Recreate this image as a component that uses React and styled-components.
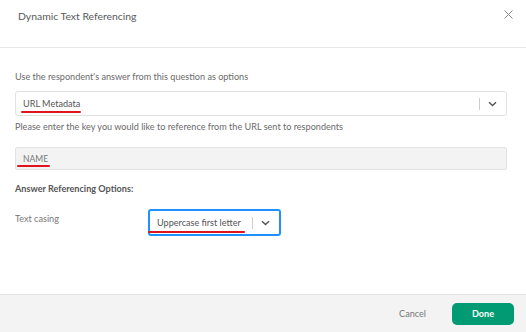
import React from "react";
import styled, { createGlobalStyle } from "styled-components";

const Global = createGlobalStyle`
  html, body { margin: 0; padding: 0; background: #fff; }
  body { font-family: Lato, "Liberation Sans", sans-serif; }
  * { box-sizing: border-box; }
`;

const Modal = styled.div`
  width: 526px;
  height: 332px;
  display: flex;
  flex-direction: column;
  background: #fff;
  font-family: Lato, sans-serif;
`;

const Header = styled.div`
  height: 48px;
  border-bottom: 1px solid #e8e8e8;
  display: flex;
  justify-content: space-between;
  align-items: flex-start;
  padding: 9px 12px 0 18px;
`;

const Title = styled.h1`
  margin: 0;
  font-size: 10.4px;
  font-weight: 400;
  color: #595959;
  line-height: 14px;
`;

const Close = styled.button`
  border: 0;
  background: none;
  padding: 0;
  width: 10px;
  height: 10px;
  margin-top: 1px;
  display: flex;
`;

const Body = styled.div`
  padding: 23px 19px 0 15px;
  display: flex;
  flex-direction: column;
`;

const Label = styled.div`
  font-size: 9.1px;
  color: #6a6a6a;
  line-height: 12px;
  margin-top: ${(p) => p.$mt || 0}px;
  margin-bottom: ${(p) => p.$mb || 0}px;
`;

const Select = styled.div`
  height: ${(p) => p.$h || 25}px;
  width: ${(p) => p.$w || "100%"};
  border: ${(p) => (p.$focus ? "2px solid #1e90ff" : "1px solid #e2e2e2")};
  border-radius: 3px;
  display: flex;
  align-items: center;
  padding-left: 7px;
  background: #fff;
  margin-top: ${(p) => p.$mt || 0}px;
`;

const Value = styled.span`
  flex: 1;
  font-size: 9.1px;
  color: #555;
  line-height: 12px;
`;

const Mark = styled.span`
  position: relative;
  display: inline-block;
  &::after {
    content: "";
    position: absolute;
    left: ${(p) => p.$l}px;
    right: ${(p) => p.$r}px;
    bottom: ${(p) => p.$b}px;
    height: 2px;
    border-radius: 1px;
    background: #e0141e;
  }
`;

const Indicator = styled.div`
  display: flex;
  align-items: center;
  height: 100%;
  padding: 0 9px 0 0;
`;

const Sep = styled.span`
  width: 1px;
  height: 12px;
  background: #ccc;
  margin-right: 8px;
`;

const Input = styled.div`
  height: 23px;
  border: 1px solid #e2e2e2;
  border-radius: 2px;
  background: #f3f3f3;
  display: flex;
  align-items: center;
  padding-left: 7px;
  font-size: 8.5px;
  color: #777;
`;

const Section = styled.div`
  font-size: 9.1px;
  font-weight: 700;
  color: #555;
  margin-top: 13px;
  line-height: 12px;
`;

const Row = styled.div`
  display: flex;
  align-items: flex-start;
  margin-top: 18px;
`;

const RowLabel = styled.div`
  width: 133px;
  font-size: 9.1px;
  color: #777;
  line-height: 12px;
`;

const Footer = styled.div`
  margin-top: auto;
  height: 38px;
  background: #f3f3f3;
  border-top: 1px solid #e3e3e3;
  display: flex;
  align-items: center;
  justify-content: flex-end;
  padding-right: 12px;
  gap: 26px;
`;

const Cancel = styled.button`
  border: 0;
  background: none;
  padding: 0;
  font-family: inherit;
  font-size: 9.1px;
  color: #777;
`;

const Done = styled.button`
  border: 0;
  width: 62px;
  height: 22px;
  border-radius: 5px;
  background: #009b72;
  color: #fff;
  font-family: inherit;
  font-size: 9.1px;
  font-weight: 700;
`;

const Chevron = () => (
  <svg width="9" height="6" viewBox="0 0 9 6" fill="none">
    <path d="M1 1.2 L4.5 4.6 L8 1.2" stroke="#555" strokeWidth="1.4" />
  </svg>
);

export default function App() {
  return (
    <>
      <Global />
      <Modal>
        <Header>
          <Title>Dynamic Text Referencing</Title>
          <Close aria-label="Close">
            <svg width="9" height="9" viewBox="0 0 9 9">
              <path d="M0.5 0.5 L8.5 8.5 M8.5 0.5 L0.5 8.5" stroke="#888" strokeWidth="1" />
            </svg>
          </Close>
        </Header>
        <Body>
          <Label $mb={8}>Use the respondent's answer from this question as options</Label>
          <Select>
            <Value>
              <Mark $l={-2} $r={-1} $b={-3}>URL Metadata</Mark>
            </Value>
            <Indicator>
              <Sep />
              <Chevron />
            </Indicator>
          </Select>
          <Label $mt={5} $mb={14}>
            Please enter the key you would like to reference from the URL sent to respondents
          </Label>
          <Input>
            <Mark $l={-6} $r={-2} $b={-3}>NAME</Mark>
          </Input>
          <Section>Answer Referencing Options:</Section>
          <Row>
            <RowLabel>Text casing</RowLabel>
            <Select $focus $w="133px" $h={27} $mt={-4}>
              <Value>
                <Mark $l={-9} $r={-4} $b={-4}>Uppercase first letter</Mark>
              </Value>
              <Indicator>
                <Sep />
                <Chevron />
              </Indicator>
            </Select>
          </Row>
        </Body>
        <Footer>
          <Cancel>Cancel</Cancel>
          <Done>Done</Done>
        </Footer>
      </Modal>
    </>
  );
}
